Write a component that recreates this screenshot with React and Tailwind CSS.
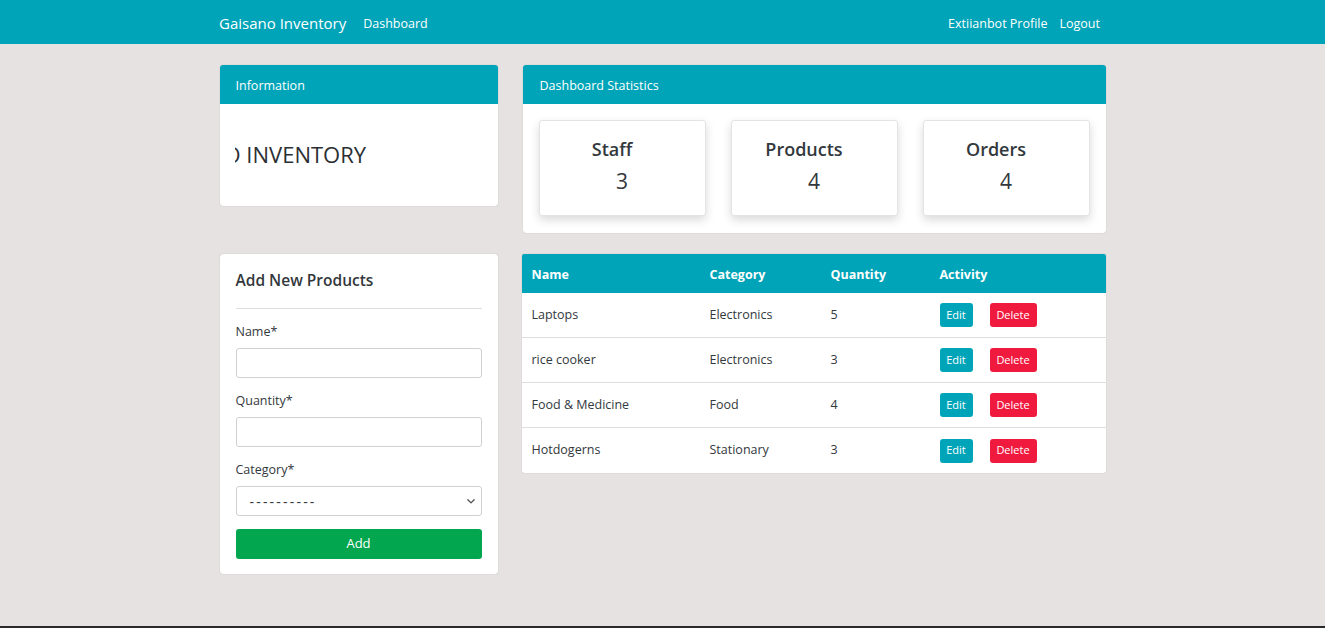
import React from "react";

const font = { fontFamily: '"Open Sans", "Noto Sans", sans-serif' };

const rows = [
  ["Laptops", "Electronics", "5"],
  ["rice cooker", "Electronics", "3"],
  ["Food & Medicine", "Food", "4"],
  ["Hotdogerns", "Stationary", "3"],
];

function Stat({ label, value }) {
  return (
    <div className="flex h-[96px] w-[167px] flex-col items-center rounded-[3px] border border-[#e3e3e3] bg-white pt-[14px] shadow-[0_4px_10px_rgba(0,0,0,0.15)]">
      <div className="pr-[20px] text-[18px] font-semibold leading-[28px] text-[#33383d]">{label}</div>
      <div className="mt-[3px] text-[21px] font-medium leading-[30px] text-[#33383d]">{value}</div>
    </div>
  );
}

export default function App() {
  return (
    <div style={font} className="flex h-[628px] flex-col border-b-[2px] border-[#2a2a2a] bg-[#e6e2e1] text-[#212529]">
      <nav className="flex h-[44px] shrink-0 items-center justify-between bg-[#00a4b8] pl-[219px] pr-[225px] pt-[3px] text-white">
        <div className="flex items-center gap-[17px]">
          <span className="text-[15px] leading-none">Gaisano Inventory</span>
          <span className="pt-[1px] text-[12.5px] leading-none">Dashboard</span>
        </div>
        <div className="flex items-center gap-[12px] pt-[1px] text-[12.5px] leading-none">
          <span>Extiianbot Profile</span>
          <span>Logout</span>
        </div>
      </nav>

      <div className="mx-auto mt-[21px] flex w-[886px] gap-[25px]">
        <div className="flex w-[278px] shrink-0 flex-col gap-[48px]">
          <div className="rounded-[3px] bg-white shadow-[0_0_1px_rgba(0,0,0,0.3)]">
            <div className="flex h-[39px] items-center rounded-t-[3px] bg-[#00a4b8] px-[16px] pt-[3px] text-[12.5px] text-white">Information</div>
            <div className="h-[102px] px-[15px] pt-[35px]">
              <div className="overflow-hidden whitespace-nowrap">
                <div className="ml-[-11px] text-[22px] leading-[30px] text-[#2b2f33]">O INVENTORY</div>
              </div>
            </div>
          </div>

          <div className="rounded-[3px] bg-white px-[16px] pb-[15px] pt-[14px] shadow-[0_0_1px_rgba(0,0,0,0.3)]">
            <div className="text-[15.5px] font-semibold leading-[24px] text-[#33383d]">Add New Products</div>
            <div className="mt-[16px] border-t border-[#dedede]" />
            <div className="mt-[13px] text-[12.5px] leading-[20px] text-[#33383d]">Name*</div>
            <div className="mt-[6px] h-[30px] rounded-[3px] border border-[#d0d0d0] bg-white" />
            <div className="mt-[13px] text-[12.5px] leading-[20px] text-[#33383d]">Quantity*</div>
            <div className="mt-[6px] h-[30px] rounded-[3px] border border-[#d0d0d0] bg-white" />
            <div className="mt-[13px] text-[12.5px] leading-[20px] text-[#33383d]">Category*</div>
            <div className="mt-[6px] flex h-[30px] items-center justify-between rounded-[3px] border border-[#d0d0d0] bg-white pl-[13px] pr-[5px]">
              <span className="text-[14px] tracking-[2.2px] text-[#33383d]">----------</span>
              <svg width="10" height="10" viewBox="0 0 16 16" fill="none" stroke="#555" strokeWidth="2.2" strokeLinecap="round" strokeLinejoin="round"><path d="M3 6l5 5 5-5" /></svg>
            </div>
            <div className="mt-[13px] flex h-[30px] items-center justify-center rounded-[3px] bg-[#02a64f] text-[13px] text-white">Add</div>
          </div>
        </div>

        <div className="flex flex-1 flex-col gap-[21px]">
          <div className="rounded-[3px] bg-white pb-[17px] shadow-[0_0_1px_rgba(0,0,0,0.3)]">
            <div className="flex h-[39px] items-center rounded-t-[3px] bg-[#00a4b8] px-[17px] pt-[3px] text-[12.5px] text-white">Dashboard Statistics</div>
            <div className="mt-[16px] flex justify-between px-[16px]">
              <Stat label="Staff" value="3" />
              <Stat label="Products" value="4" />
              <Stat label="Orders" value="4" />
            </div>
          </div>

          <div className="ml-[-1px] overflow-hidden rounded-[2px] bg-white shadow-[0_0_1px_rgba(0,0,0,0.3)]">
            <div className="grid h-[39px] grid-cols-[178px_121px_109px_1fr] items-center bg-[#00a4b8] pl-[10px] pt-[3px] text-[12.5px] font-bold text-white">
              <span>Name</span>
              <span>Category</span>
              <span>Quantity</span>
              <span>Activity</span>
            </div>
            {rows.map((r, i) => (
              <div key={i} className={`grid h-[45px] grid-cols-[178px_121px_109px_1fr] items-center pl-[10px] text-[12.5px] text-[#33383d] ${i < rows.length - 1 ? "border-b border-[#dedede]" : ""}`}>
                <span>{r[0]}</span>
                <span>{r[1]}</span>
                <span>{r[2]}</span>
                <div className="flex items-center gap-[17px]">
                  <span className="flex h-[24px] w-[33px] items-center justify-center rounded-[3px] bg-[#00a4b8] text-[11px] text-white">Edit</span>
                  <span className="flex h-[24px] w-[47px] items-center justify-center rounded-[3px] bg-[#ef1a3e] text-[11px] text-white">Delete</span>
                </div>
              </div>
            ))}
          </div>
        </div>
      </div>
    </div>
  );
}
